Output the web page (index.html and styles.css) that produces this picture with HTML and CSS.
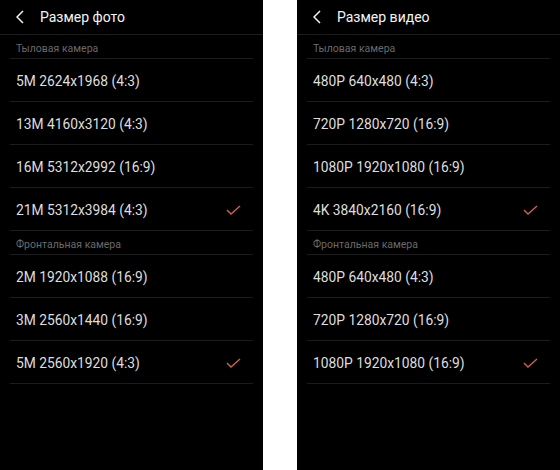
FILE: index.html
```html
<!DOCTYPE html>
<html lang="ru">
    <head>
        <meta charset="UTF-8" />
        <title>Размер фото и видео</title>
        <link rel="stylesheet" href="styles.css">
    </head>
    <body>
        <div class="screen">
            <div class="topbar">
                <svg class="back" viewBox="0 0 8 14" width="8" height="14">
                    <path d="M7 1 1 7l6 6" />
                </svg>
                <span class="title">Размер фото</span>
            </div>
            <div class="list">
                <div class="section">Тыловая камера</div>
                <div class="item">5M 2624x1968 (4:3)</div>
                <div class="item">13M 4160x3120 (4:3)</div>
                <div class="item">16M 5312x2992 (16:9)</div>
                <div class="item selected">
                    21M 5312x3984 (4:3)
                    <svg class="check" viewBox="0 0 15 10" width="15" height="10">
                        <path d="M1 5l4 4 9-8" />
                    </svg>
                </div>
                <div class="section">Фронтальная камера</div>
                <div class="item">2M 1920x1088 (16:9)</div>
                <div class="item">3M 2560x1440 (16:9)</div>
                <div class="item selected">
                    5M 2560x1920 (4:3)
                    <svg class="check" viewBox="0 0 15 10" width="15" height="10">
                        <path d="M1 5l4 4 9-8" />
                    </svg>
                </div>
            </div>
        </div>

        <div class="screen">
            <div class="topbar">
                <svg class="back" viewBox="0 0 8 14" width="8" height="14">
                    <path d="M7 1 1 7l6 6" />
                </svg>
                <span class="title">Размер видео</span>
            </div>
            <div class="list">
                <div class="section">Тыловая камера</div>
                <div class="item">480P 640x480 (4:3)</div>
                <div class="item">720P 1280x720 (16:9)</div>
                <div class="item">1080P 1920x1080 (16:9)</div>
                <div class="item selected">
                    4K 3840x2160 (16:9)
                    <svg class="check" viewBox="0 0 15 10" width="15" height="10">
                        <path d="M1 5l4 4 9-8" />
                    </svg>
                </div>
                <div class="section">Фронтальная камера</div>
                <div class="item">480P 640x480 (4:3)</div>
                <div class="item">720P 1280x720 (16:9)</div>
                <div class="item selected">
                    1080P 1920x1080 (16:9)
                    <svg class="check" viewBox="0 0 15 10" width="15" height="10">
                        <path d="M1 5l4 4 9-8" />
                    </svg>
                </div>
            </div>
        </div>
    </body>
</html>
```

FILE: styles.css
```css
html {
    --bg-color: #000;
    --line-color: #1c1c1c;
    --text-color: #dedede;
    --muted-color: #6a6a6a;
    --accent-color: #d0604c;
}

* {
    box-sizing: border-box;
}

body {
    margin: 0;
    height: 470px;
    background-color: #fff;
    display: flex;
    justify-content: space-between;
    font-family: Roboto, "Noto Sans", sans-serif;
    overflow: hidden;
}

.screen {
    width: 263px;
    height: 100%;
    background-color: var(--bg-color);
}

.topbar {
    height: 35px;
    display: flex;
    align-items: center;
    gap: 16px;
    padding: 0 16px;
    border-bottom: 1px solid var(--line-color);
}

.back {
    fill: none;
    stroke: #f2f2f2;
    stroke-width: 1.5;
    flex-shrink: 0;
}

.title {
    font-size: 14px;
    color: #f4f4f4;
}

.list {
    padding: 0 10px;
}

.section {
    height: 24px;
    display: flex;
    align-items: center;
    padding: 4px 6px 0;
    font-size: 10.5px;
    color: var(--muted-color);
    border-bottom: 1px solid var(--line-color);
}

.item {
    height: 43px;
    display: flex;
    align-items: center;
    justify-content: space-between;
    padding: 1px 6px 0;
    font-size: 13.8px;
    color: var(--text-color);
    border-bottom: 1px solid var(--line-color);
}

.check {
    fill: none;
    stroke: var(--accent-color);
    stroke-width: 1.4;
    margin-right: 6px;
}
```
